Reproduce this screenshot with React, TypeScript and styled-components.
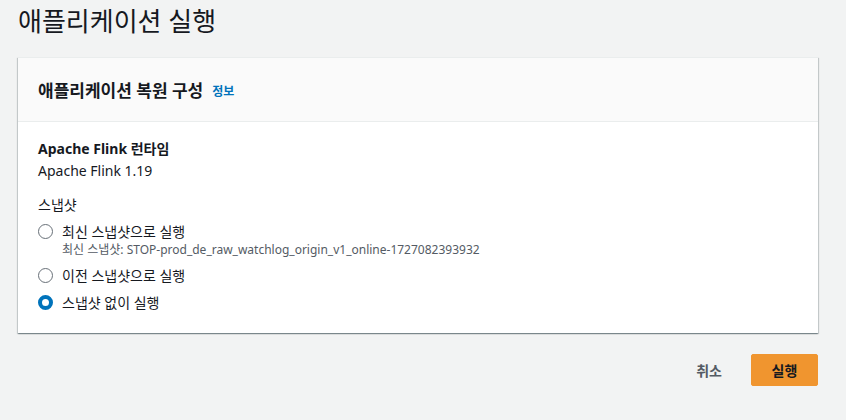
import React, { useState } from 'react';
import styled, { createGlobalStyle } from 'styled-components';

const GlobalStyle = createGlobalStyle`
  html, body {
    margin: 0;
    padding: 0;
    background: #f2f3f3;
    font-family: "Noto Sans", "Noto Sans CJK KR", sans-serif;
    color: #16191f;
  }
`;

const Page = styled.div`
  padding: 0 28px 0 18px;
  width: 800px;
`;

const PageTitle = styled.h1`
  margin: 0;
  height: 44px;
  line-height: 44px;
  font-size: 26px;
  font-weight: 400;
  margin-top: 0;
  transform: translateY(-1px);
  margin-bottom: 13px;
`;

const Card = styled.section`
  background: #fff;
  border-top: 1px solid #eaeded;
  box-shadow: 0 1px 1px 0 rgba(0, 28, 36, 0.3), 1px 1px 1px 0 rgba(0, 28, 36, 0.15),
    -1px 1px 1px 0 rgba(0, 28, 36, 0.15);
`;

const CardHeader = styled.div`
  display: flex;
  align-items: center;
  gap: 9px;
  height: 63px;
  padding: 0 20px;
  background: #fafafa;
  border-bottom: 1px solid #eaeded;
`;

const CardTitle = styled.h2`
  margin: 0;
  font-size: 17px;
  font-weight: 700;
`;

const InfoLink = styled.a`
  color: #0073bb;
  font-size: 12px;
  font-weight: 700;
  text-decoration: none;
  margin-top: 2px;
`;

const CardBody = styled.div`
  padding: 17px 20px 16px;
`;

const FieldLabel = styled.div<{ $bold?: boolean }>`
  font-size: 14px;
  line-height: 20px;
  font-weight: ${(p) => (p.$bold ? 700 : 400)};
`;

const FieldValue = styled.div`
  font-size: 14px;
  line-height: 20px;
  margin-top: 2px;
  color: #16191f;
`;

const SnapshotGroup = styled.div`
  margin-top: 14px;
`;

const RadioList = styled.div`
  display: flex;
  flex-direction: column;
  margin-top: 4px;
`;

const RadioRow = styled.label`
  display: flex;
  align-items: flex-start;
  gap: 9px;
  padding: 3px 0 4px;
  cursor: pointer;
`;

const RadioCircle = styled.span<{ $checked: boolean }>`
  flex: none;
  box-sizing: border-box;
  width: 15px;
  height: 15px;
  margin-top: 2px;
  border-radius: 50%;
  background: #fff;
  border: ${(p) => (p.$checked ? '4px solid #0073bb' : '1.5px solid #687078')};
`;

const RadioText = styled.div`
  display: flex;
  flex-direction: column;
`;

const RadioLabel = styled.span`
  font-size: 14px;
  line-height: 20px;
`;

const RadioDesc = styled.span`
  font-size: 12px;
  line-height: 16px;
  color: #545b64;
  margin-bottom: 1px;
`;

const Actions = styled.div`
  display: flex;
  justify-content: flex-end;
  align-items: center;
  gap: 9px;
  margin-top: 21px;
`;

const TextButton = styled.button`
  border: none;
  background: none;
  font-family: inherit;
  font-size: 14px;
  font-weight: 700;
  color: #545b64;
  padding: 0 20px;
  height: 32px;
  cursor: pointer;
`;

const PrimaryButton = styled.button`
  border: 1px solid #f0952f;
  border-radius: 2px;
  background: #f0952f;
  font-family: inherit;
  font-size: 14px;
  font-weight: 700;
  color: #16191f;
  width: 67px;
  height: 32px;
  cursor: pointer;
`;

const options = [
  {
    id: 'latest',
    label: '최신 스냅샷으로 실행',
    desc: '최신 스냅샷: STOP-prod_de_raw_watchlog_origin_v1_online-1727082393932',
  },
  { id: 'previous', label: '이전 스냅샷으로 실행' },
  { id: 'none', label: '스냅샷 없이 실행' },
];

const App = () => {
  const [selected, setSelected] = useState('none');

  return (
    <>
      <GlobalStyle />
      <Page>
        <PageTitle>애플리케이션 실행</PageTitle>
        <Card>
          <CardHeader>
            <CardTitle>애플리케이션 복원 구성</CardTitle>
            <InfoLink href="#">정보</InfoLink>
          </CardHeader>
          <CardBody>
            <FieldLabel $bold>Apache Flink 런타임</FieldLabel>
            <FieldValue>Apache Flink 1.19</FieldValue>
            <SnapshotGroup>
              <FieldLabel>스냅샷</FieldLabel>
              <RadioList>
                {options.map((o) => (
                  <RadioRow key={o.id} onClick={() => setSelected(o.id)}>
                    <RadioCircle $checked={selected === o.id} />
                    <RadioText>
                      <RadioLabel>{o.label}</RadioLabel>
                      {o.desc && <RadioDesc>{o.desc}</RadioDesc>}
                    </RadioText>
                  </RadioRow>
                ))}
              </RadioList>
            </SnapshotGroup>
          </CardBody>
        </Card>
        <Actions>
          <TextButton>취소</TextButton>
          <PrimaryButton>실행</PrimaryButton>
        </Actions>
      </Page>
    </>
  );
};

export default App;
